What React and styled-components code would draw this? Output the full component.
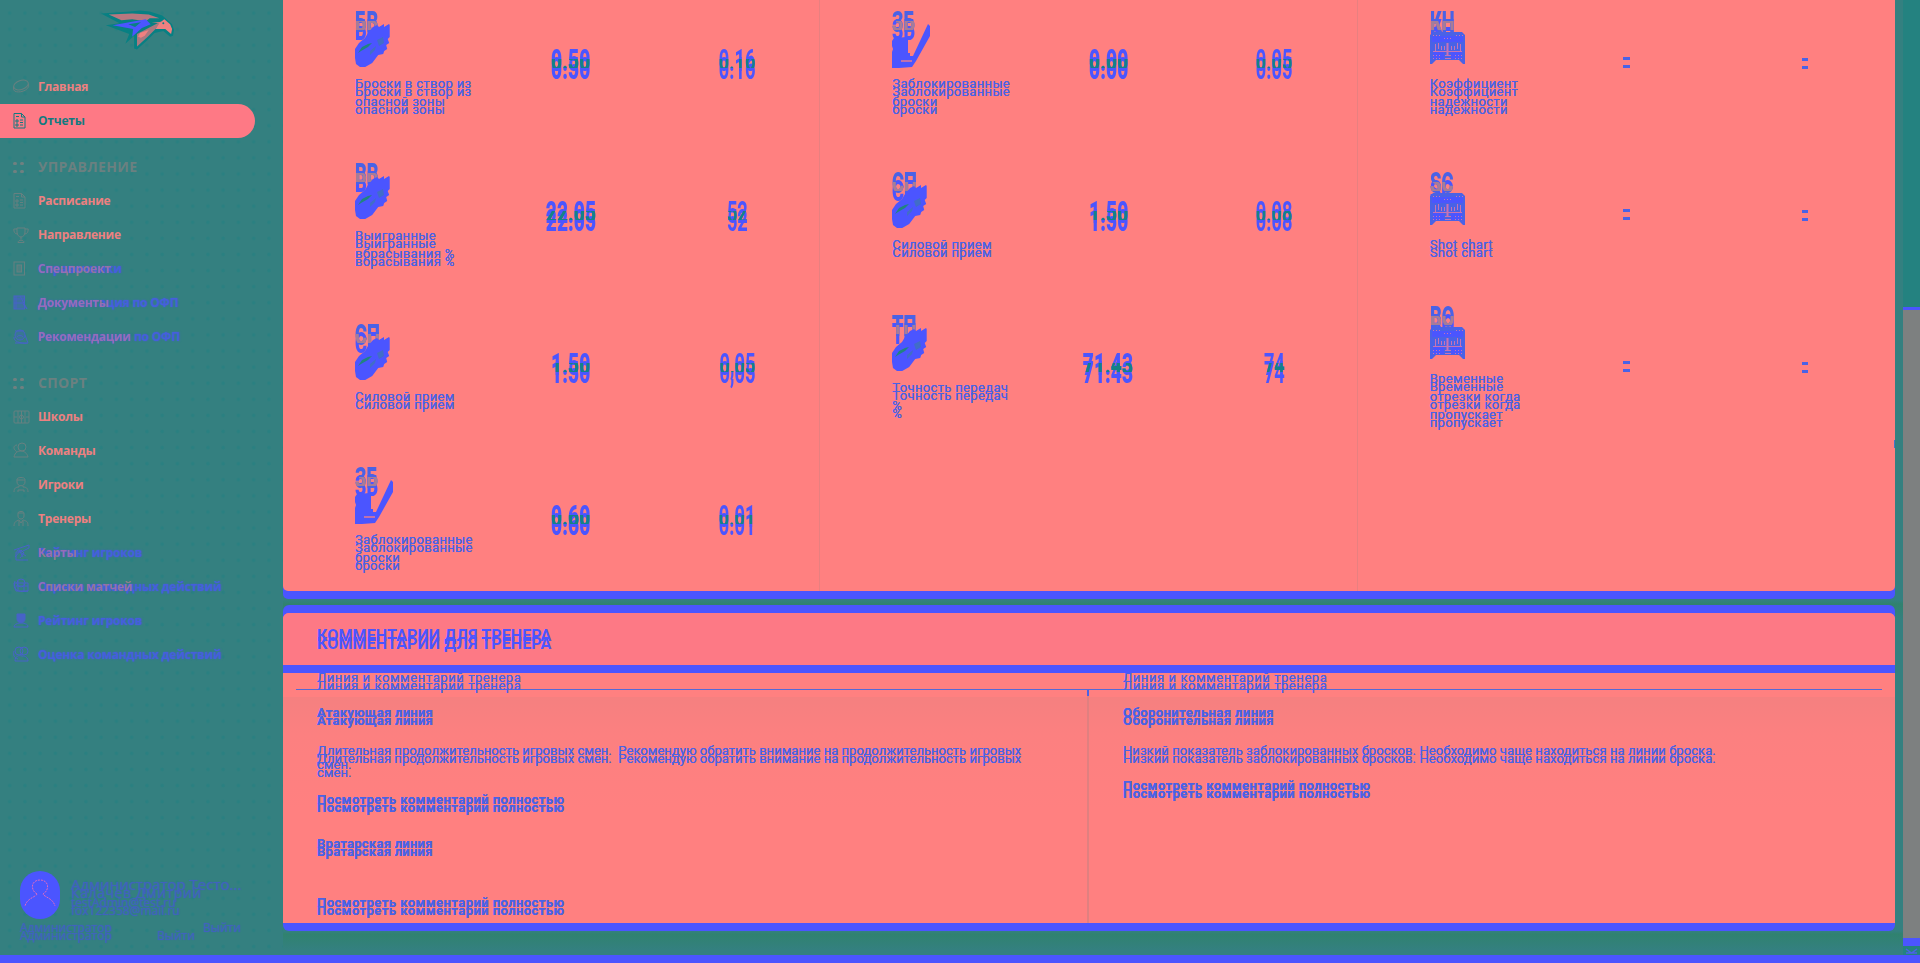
import React from 'react';
import styled, { createGlobalStyle, css } from 'styled-components';

const BLUE = '#4b55ff';
const INK = '#4a62e6';
const PINK = '#ff8080';
const TEAL = '#348080';

const Global = createGlobalStyle`
  * { box-sizing: border-box; }
  body { margin: 0; background: ${TEAL}; font-family: Roboto, "Liberation Sans", sans-serif; overflow: hidden; }
`;

const Page = styled.div`
  height: 963px;
  display: flex;
  flex-direction: column;
  overflow: hidden;
`;
const Shell = styled.div`
  height: 955px;
  display: grid;
  grid-template-columns: 283px 1620px 17px;
`;
const BottomStripe = styled.div`
  height: 8px;
  background: ${BLUE};
`;

/* ---------- sidebar ---------- */
const Sidebar = styled.aside`
  height: 955px;
  display: flex;
  flex-direction: column;
  background-color: ${TEAL};
  background-image: radial-gradient(circle, #2a8081 1px, transparent 2.4px);
  background-size: 15.25px 16.1px;
  background-position: 2px 5px;
`;
const LogoBox = styled.div`
  height: 70px;
  padding: 9px 0 0 101px;
`;
const NavRow = styled.div`
  height: 34px;
  width: 255px;
  display: flex;
  align-items: center;
  padding-left: 13px;
  border-radius: 0 17px 17px 0;
  color: ${(p) => (p.$active ? '#127a80' : '#748080')};
  background: ${(p) => (p.$active ? '#fe7985' : 'transparent')};
`;
const NavIcon = styled.span`
  width: 25px;
  height: 18px;
  flex: none;
  color: ${(p) => (p.$changed ? '#4763c8' : 'inherit')};
  opacity: ${(p) => (p.$solid ? 1 : 0.8)};
  svg { display: block; }
`;
const NavLabel = styled.span`
  position: relative;
  margin-top: -1px;
  font: 700 12px/18px "Open Sans", sans-serif;
  letter-spacing: -0.2px;
  white-space: nowrap;
  color: ${(p) => (p.$changed ? '#455fdc' : p.$active ? '#127a80' : '#ed8080')};
  text-shadow: ${(p) => (p.$changed ? '0 0 2px #4263c8' : 'none')};
  ${(p) => p.$trace && css`
    &::after {
      content: '${p.$trace}';
      position: absolute;
      left: 0;
      top: 0;
      color: #e87c92;
      opacity: 0.5;
      text-shadow: none;
    }
    &::after { white-space: pre; }
  `}
`;
const SectionRow = styled.div`
  height: 34px;
  margin-top: 12px;
  padding-left: 13px;
  display: flex;
  align-items: center;
  color: #6b8080;
  font: 700 14px/18px "Open Sans", sans-serif;
  letter-spacing: 0.35px;
`;
const Dots = styled.span`
  width: 25px;
  display: grid;
  grid-template-columns: 4px 4px;
  gap: 5px 3px;
  i { width: 4px; height: 3px; border-radius: 2px; background: #708080; }
`;
const UserBox = styled.div`
  margin-top: auto;
  height: 85px;
  padding-left: 20px;
  color: #4063bd;
`;
const UserTop = styled.div`
  display: flex;
  gap: 11px;
  height: 50px;
`;
const Avatar = styled.div`
  width: 40px;
  height: 48px;
  margin-top: 1px;
  border-radius: 20px;
  background: ${BLUE};
`;
const UserLines = styled.div`
  padding-top: 7px;
`;
const UserLine = styled.div`
  height: ${(p) => p.$h}px;
  font: 400 ${(p) => p.$size}px/15px "Open Sans", sans-serif;
  letter-spacing: ${(p) => p.$track || 0};
  white-space: nowrap;
  text-shadow: 0 0 1px currentColor;
`;
const UserBottom = styled.div`
  display: flex;
  font: 400 12px/14px "Open Sans", sans-serif;
  height: 24px;
  padding-top: 1px;
`;
const Role = styled.span`
  width: 137px;
  text-shadow: 0 8px 0 currentColor, 0 0 1px currentColor, 0 8px 1px currentColor;
`;
const Exit = styled.span`
  width: 46px;
  padding-top: ${(p) => (p.$low ? 8 : 0)}px;
  text-shadow: 0 0 1px currentColor;
`;

/* ---------- main ---------- */
const Main = styled.main`
  height: 955px;
  overflow: hidden;
  background: linear-gradient(#348080 0 600px, #30826f 604px, #348080 620px 931px, #30826f 934px, #348080 950px);
`;
const StatsCard = styled.section`
  width: 1612px;
  height: 609px;
  margin-top: -18px;
  display: grid;
  grid-template-columns: repeat(3, 1fr);
  background: ${PINK};
  border-radius: 5px;
  box-shadow: 0 8px 0 ${BLUE};
  position: relative;
`;
const EdgeTick = styled.i`
  position: absolute;
  right: 0;
  top: 458px;
  width: 1px;
  height: 8px;
  background: #4078c8;
`;
const Column = styled.div`
  & + & { box-shadow: -1px 0 0 #e88080; }
`;
const StatRow = styled.div`
  height: 152px;
  display: grid;
  grid-template-columns: ${(p) => (p.$even ? '179px 179px 179px' : '205px 166px 166px')};
  align-items: center;
`;
const StatName = styled.div`
  padding-left: 72px;
  white-space: nowrap;
`;
const overlap = (text, color, from, to) => css`
  &::after {
    content: '${text}';
    position: absolute;
    left: 0;
    top: 0;
    text-shadow: none;
    color: transparent;
    background: linear-gradient(transparent ${from}px, ${color} ${from}px ${to}px, transparent ${to}px);
    -webkit-background-clip: text;
    background-clip: text;
  }
`;
const Code = styled.div`
  position: relative;
  width: max-content;
  height: 34px;
  font: 900 30px/34px Roboto, sans-serif;
  color: ${INK};
  text-shadow: 0 8px 0 ${BLUE};
  transform: scaleX(0.61);
  transform-origin: 0 0;
  ${(p) => overlap(p.$text, '#a67c98', 16, 25)}
`;
const Art = styled.div`
  height: 35px;
  margin: -15px 0 16px;
  position: relative;
  svg { display: block; overflow: visible; }
`;
const softGhost = css`
  text-shadow: 0 8px 0 ${INK}, 0 0 0.6px ${INK}, 0 8px 0.6px ${INK};
`;
const Label = styled.div`
  font: 400 13px/18px Roboto, sans-serif;
  letter-spacing: 0.34px;
  color: ${INK};
  white-space: pre;
  ${softGhost}
`;
const Value = styled.div`
  position: relative;
  top: 2px;
  justify-self: center;
  font: ${(p) => (p.$thin ? 700 : 900)} 32px/36px Roboto, sans-serif;
  color: ${BLUE};
  text-shadow: 0 8px 0 ${BLUE};
  transform: scaleX(${(p) => (p.$thin ? 0.57 : 0.6)});
  ${(p) => overlap(p.$text, '#138287', 17, 26)}
`;
const Dash = styled.i`
  justify-self: center;
  width: ${(p) => (p.$small ? 6 : 7)}px;
  height: 11px;
  border: solid ${INK};
  border-width: 3px 0;
  margin-top: ${(p) => (p.$small ? 10 : 8)}px;
`;

const Comments = styled.section`
  width: 1612px;
  height: 310px;
  margin-top: 22px;
  background: ${PINK};
  border-radius: 6px;
  box-shadow: 0 -8px 0 ${BLUE}, 0 8px 0 ${BLUE};
`;
const CommentsHeader = styled.header`
  height: 60px;
  padding: 13px 34px 0;
  border-bottom: 8px solid ${BLUE};
  border-radius: 6px 6px 0 0;
  background: #fd7985;
  color: ${BLUE};
  font: 700 16px/19px Roboto, sans-serif;
  letter-spacing: 0.13px;
  text-shadow: 0 8px 0 ${BLUE};
`;
const HeadRow = styled.div`
  height: 17px;
  margin: 0 13px;
  display: grid;
  grid-template-columns: 1fr 1fr;
  border-bottom: 1px solid #5569d5;
`;
const HeadCell = styled.div`
  padding-left: ${(p) => p.$pad}px;
  font: 400 13px/16px Roboto, sans-serif;
  letter-spacing: 0.58px;
  margin-top: -3px;
  color: ${INK};
  ${softGhost}
`;
const CommentGrid = styled.div`
  height: 233px;
  display: grid;
  grid-template-columns: 804px 808px;
  grid-template-rows: minmax(0, 1fr);
  background: linear-gradient(transparent 7px, #f58080 7px, #fc8080 45px, ${PINK} 120px);
`;
const CommentCol = styled.div`
  padding: 14px 34px 0;
  color: ${INK};
  ${(p) => p.$divided && css`
    border-left: 2px solid;
    border-image: linear-gradient(#4a62e6 7px, #e08080 7px) 1;
  `}
`;
const LineTitle = styled.div`
  font: 700 13px/18px Roboto, sans-serif;
  letter-spacing: ${(p) => p.$track || '0.26px'};
  ${softGhost}
`;
const LineText = styled.div`
  margin-top: 22px;
  font: 400 13px/14px Roboto, sans-serif;
  letter-spacing: ${(p) => p.$track || '0.03px'};
  white-space: pre;
  ${softGhost}
`;
const MoreLink = styled.div`
  margin-top: ${(p) => p.$gap}px;
  margin-bottom: 26px;
  font: 700 13px/18px Roboto, sans-serif;
  letter-spacing: 0.44px;
  ${softGhost}
`;

/* ---------- scrollbar ---------- */
const ScrollTrack = styled.div`
  height: 955px;
  display: flex;
  flex-direction: column;
  background: #248280;
`;
const TrackTop = styled.div`
  height: 307px;
`;
const Thumb = styled.div`
  height: 639px;
  border: solid ${BLUE};
  border-width: 3px 0 8px;
  background: #7d8080;
`;
const ArrowBox = styled.div`
  height: 9px;
  svg { display: block; }
`;

const iconPaths = {
  puck: <><ellipse cx="8" cy="7" rx="7.5" ry="4.5" transform="rotate(-18 8 7)" /><path d="M.6 8.5v3.200c1.500 4 12.500 2.500 15-3V5.500" /></>,
  report: <><path d="M1 1.500h7.500l3.500 3.500v11H1zM8.500 1.500V5H12" /><path d="M3 4.500h3M3 8h2v2H3zM3 12h2v2H3zM7 8h3M7 10.500h3M7 13h3" /></>,
  cup: <><path d="M4 2h8v4c0 3-2 5-4 5S4 9 4 6zM4 3H.8c0 3 1 5 3.700 5M12 3h3.200c0 3-1 5-3.700 5M8 11v2.500M5 16.500c0-3 6-3 6 0z" /></>,
  book: <><rect x="1" y="2" width="10.500" height="13" /><rect x="4" y="5" width="4.500" height="7" fill="currentColor" fillOpacity=".5" /></>,
  doc: <><rect x="1" y="2" width="10.500" height="13" fill="currentColor" fillOpacity=".45" /><path d="M1 5h11M1 9h11M3 2v13M7 2l7 13M10 10l4 5" /></>,
  recommend: <><circle cx="7" cy="7" r="5" fill="currentColor" fillOpacity=".3" /><path d="M1 9c-1 6 12 7 14 6l-3-8M2 3h9M4 9c1-2 5-2 6 0M2 15h12" /></>,
  rink: <><rect x="1" y="3" width="15" height="12" rx="1" /><path d="M8.500 3v12M5 3v12M12 3v12M1 9h3M13 9h3" /><circle cx="8.500" cy="9" r="2" /></>,
  team: <><circle cx="9" cy="5" r="4" /><path d="M1 15c1-5 4-6 7-6s6 2 7 6zM4 3C1 3 0 6 2 8s2 2 0 4" /></>,
  player: <><path d="M4 6V3c1-2 7-2 8 0v3c0 5-8 5-8 0zM4 4h8M1 16c0-4 2-5 5-5v-1M15 16c0-4-2-5-5-5v-1M5 16v-2h6v2" /></>,
  coach: <><path d="M5 6V3c0-2 6-2 6 0v3c0 4-6 4-6 0zM5 3h6M1 16c0-4 2-5 5-6l2 3 2-3c4 1 5 2 5 6M6 11v5M10 11v5" /></>,
  cards: <><path d="M1 6l6-2 9-3v3L8 8H3v8h12M2 13l6-7 3 3-4 5M4 6l9 6M5 4l5 9" /></>,
  rating: <><circle cx="8" cy="5" r="4" /><path d="M1 5h14v8H3zM2 3c-3 8 2 12 13 10M3 8h12M5 3v9M11 5v8" /></>,
  person: <><path d="M4 2h8v5c0 5-8 5-8 0z" fill="currentColor" /><path d="M1 15c0-3 3-3 5-4h4c3 1 5 1 5 4z" /></>,
  group: <><circle cx="6" cy="5" r="4" /><circle cx="11" cy="5" r="4" /><path d="M2 15c0-5 4-6 7-5 4 0 6 2 6 5zM1 5c-1 4 0 7 4 8" /></>,
};

const Icon = ({ name }) => (
  <svg width="17" height="17" viewBox="0 0 17 17" fill="none" stroke="currentColor" strokeWidth="1">
    {iconPaths[name]}
  </svg>
);

const Glove = () => (
  <svg width="35" height="43" viewBox="0 0 35 43">
    <path fill={BLUE} d="M34 0l.7 1v12l-2 2 1.500 4-3 2 1 4-3 2-1 3-5 1-6 8-7 4H5l-4-3-1-6V25l4-6 6-5 3-5 5-6 4-2 2 2 5-3v3z" />
    <path fill="#218380" d="M3 29l4-6 6-3 4-1-4 4-7 4z" />
    <path fill="#416dc8" d="M15 27l6-5-1 4-5 5zM22 16l6-3 1 6-5 3z" />
  </svg>
);
const Stick = () => (
  <svg width="38" height="44" viewBox="0 0 38 44">
    <path fill={BLUE} d="M0 17l2-3 13-1 1 2v14h2v3h3L36 0l2 2v10L24 37l-4 6-13 1H0V28l1-3-1-3z" />
    <path stroke={PINK} strokeWidth="1.300" d="M9 37h11" />
  </svg>
);
const Net = () => (
  <svg width="35" height="43" viewBox="0 0 35 43">
    <path fill={INK} d="M0 11l3-3h29l3 3v29h-2l-4-4H6l-4 4H0z" />
    <path fill={BLUE} d="M2 12h31v6H2zM3 28h11v7H3zM21 28h11v7H21z" />
    <g stroke="#c873b4" strokeWidth="1" fill="none">
      <path d="M5.500 20v7M8.500 19v6M11.500 22v4M14.500 22v4M21.500 22v4M24.500 22v4M27.500 19v6M30.500 20v7M3 27.500h29" />
      <path strokeDasharray="1 2" d="M3 11.500h7M26 11.500h7M3 31.500h7M25 31.500h8M3 34.500h7M25 34.500h8M14 14.500h8" />
      <path strokeWidth="2" d="M17.500 19v12" /><path d="M15 31.500h6M15 34.500h6" />
    </g>
  </svg>
);
const arts = { glove: Glove, stick: Stick, net: Net };

const Logo = () => (
  <svg width="74" height="42" viewBox="0 0 76 42">
    <path fill="#078083" d="M0 4L30 2l10-1 10 1 13 4 10 9 2 6-1 6-3 1-7-6-9 2-8 8-10 9-3-1V27l-9 8 4-10L5 16l14-2z" />
    <path fill="#b8777f" d="M8 5l24-1 17 1 11 4-10 0-4 3-14-2-11 1z" />
    <path fill={BLUE} d="M12 16l34-6 5 5-9 4-10 9 1-8z" />
    <path fill="#078083" d="M28 15l13-2-6 5z" />
    <path fill="#a9787f" d="M37 38V25l25-13-6 8-8 8z" />
    <path fill="#f08080" d="M49 9l3 4 9 0 4-3 6 5 2 5-1 5-6-5-10 0 4-6-8-1zM38 28l2-4 9-3-4 6-4 2z" />
    <circle cx="64" cy="14" r="1" fill="#078083" />
  </svg>
);

const topNav = [
  { icon: 'puck', text: 'Главная' },
  { icon: 'report', text: 'Отчеты', active: true },
];
const manageNav = [
  { icon: 'report', text: 'Расписание' },
  { icon: 'cup', text: 'Направление' },
  { icon: 'book', text: 'Справочники', trace: 'Спецпроект' },
  { icon: 'doc', text: 'Документация по ОФП', trace: 'Документы', changed: true },
  { icon: 'recommend', text: 'Рекомендации по ОФП', trace: 'Рекомендации', changed: true },
];
const sportNav = [
  { icon: 'rink', text: 'Школы' },
  { icon: 'team', text: 'Команды' },
  { icon: 'player', text: 'Игроки' },
  { icon: 'coach', text: 'Тренеры' },
  { icon: 'cards', text: 'Рейтинг игроков', trace: 'Карты', changed: true },
  { icon: 'rating', text: 'Оценка командных действий', trace: 'Списки матчей', changed: true },
  { icon: 'person', text: 'Рейтинг игроков', changed: true },
  { icon: 'group', text: 'Оценка командных действий', changed: true },
];

const NavItem = ({ item }) => (
  <NavRow $active={item.active}>
    <NavIcon $changed={item.changed} $solid={item.active || item.changed}><Icon name={item.icon} /></NavIcon>
    <NavLabel $active={item.active} $changed={item.changed || item.trace} $trace={item.trace}>{item.text}</NavLabel>
  </NavRow>
);
const Section = ({ title }) => (
  <SectionRow><Dots><i /><i /><i /><i /></Dots>{title}</SectionRow>
);

const columns = [
  [
    { code: 'БВ', art: 'glove', label: 'Броски в створ из\nопасной зоны', a: '0.50', b: '0.16' },
    { code: 'ВВ', art: 'glove', label: 'Выигранные\nвбрасывания %', a: '22.05', b: '52' },
    { code: 'СП', art: 'glove', label: 'Силовой прием', a: '1.50', b: '0,05' },
    { code: 'ЗБ', art: 'stick', label: 'Заблокированные\nброски', a: '0.60', b: '0.01' },
  ],
  [
    { code: 'ЗБ', art: 'stick', label: 'Заблокированные\nброски', a: '0.00', b: '0.05' },
    { code: 'СП', art: 'glove', label: 'Силовой прием', a: '1.50', b: '0.08' },
    { code: 'ТП', art: 'glove', label: 'Точность передач\n%', a: '71.43', b: '74' },
  ],
  [
    { code: 'КН', art: 'net', label: 'Коэффициент\nнадежности' },
    { code: 'SC', art: 'net', label: 'Shot chart' },
    { code: 'ВО', art: 'net', label: 'Временные\nотрезки когда\nпропускает' },
  ],
];

const Stat = ({ stat }) => {
  const Drawing = arts[stat.art];
  return (
    <StatRow $even={!stat.a}>
      <StatName>
        <Code $text={stat.code}>{stat.code}</Code>
        <Art><Drawing /></Art>
        <Label>{stat.label}</Label>
      </StatName>
      {stat.a ? <Value $text={stat.a}>{stat.a}</Value> : <Dash />}
      {stat.b ? <Value $thin $text={stat.b}>{stat.b}</Value> : <Dash $small />}
    </StatRow>
  );
};

export default function App() {
  return (
    <Page>
      <Global />
      <Shell>
        <Sidebar>
          <LogoBox><Logo /></LogoBox>
          {topNav.map((n) => <NavItem key={n.text} item={n} />)}
          <Section title="УПРАВЛЕНИЕ" />
          {manageNav.map((n) => <NavItem key={n.text} item={n} />)}
          <Section title="СПОРТ" />
          {sportNav.map((n, i) => <NavItem key={i} item={n} />)}
          <UserBox>
            <UserTop>
              <Avatar>
                <svg width="40" height="48" viewBox="0 0 40 48" fill="none" stroke="#e06bc0" strokeDasharray="2 1">
                  <path d="M17 23c-7-4-6-14 3-14s10 10 3 14c1 3 10 4 12 12M17 23c-1 3-10 4-12 12" />
                </svg>
              </Avatar>
              <UserLines>
                <UserLine $h={8} $size={15}>Администратор Тесто...</UserLine>
                <UserLine $h={10} $size={14} $track="0.6px">Калачев Дмитрий</UserLine>
                <UserLine $h={8} $size={12}>testAdmin@test.ru</UserLine>
                <UserLine $h={8} $size={12}>fox122358@mail.ru</UserLine>
              </UserLines>
            </UserTop>
            <UserBottom>
              <Role>Администратор</Role>
              <Exit $low>Выйти</Exit>
              <Exit>Выйти</Exit>
            </UserBottom>
          </UserBox>
        </Sidebar>
        <Main>
          <StatsCard>
            {columns.map((col, i) => (
              <Column key={i}>{col.map((s) => <Stat key={s.label} stat={s} />)}</Column>
            ))}
            <EdgeTick />
          </StatsCard>
          <Comments>
            <CommentsHeader>КОММЕНТАРИИ ДЛЯ ТРЕНЕРА</CommentsHeader>
            <HeadRow>
              <HeadCell $pad={21}>Линия и комментарий тренера</HeadCell>
              <HeadCell $pad={34}>Линия и комментарий тренера</HeadCell>
            </HeadRow>
            <CommentGrid>
              <CommentCol>
                <LineTitle>Атакующая линия</LineTitle>
                <LineText>{'Длительная продолжительность игровых смен.  Рекомендую обратить внимание на продолжительность игровых\nсмен.'}</LineText>
                <MoreLink $gap={19}>Посмотреть комментарий полностью</MoreLink>
                <LineTitle>Вратарская линия</LineTitle>
                <MoreLink $gap={41}>Посмотреть комментарий полностью</MoreLink>
              </CommentCol>
              <CommentCol $divided>
                <LineTitle $track="0.42px">Оборонительная линия</LineTitle>
                <LineText $track="0.08px">Низкий показатель заблокированных бросков. Необходимо чаще находиться на линии броска.</LineText>
                <MoreLink $gap={19}>Посмотреть комментарий полностью</MoreLink>
              </CommentCol>
            </CommentGrid>
          </Comments>
        </Main>
        <ScrollTrack>
          <TrackTop />
          <Thumb />
          <ArrowBox>
            <svg width="17" height="9" viewBox="0 0 17 9"><path d="M3 3l5.500 4L14 3M3 7h11" stroke={INK} strokeWidth="1.500" fill="none" /></svg>
          </ArrowBox>
        </ScrollTrack>
      </Shell>
      <BottomStripe />
    </Page>
  );
}
